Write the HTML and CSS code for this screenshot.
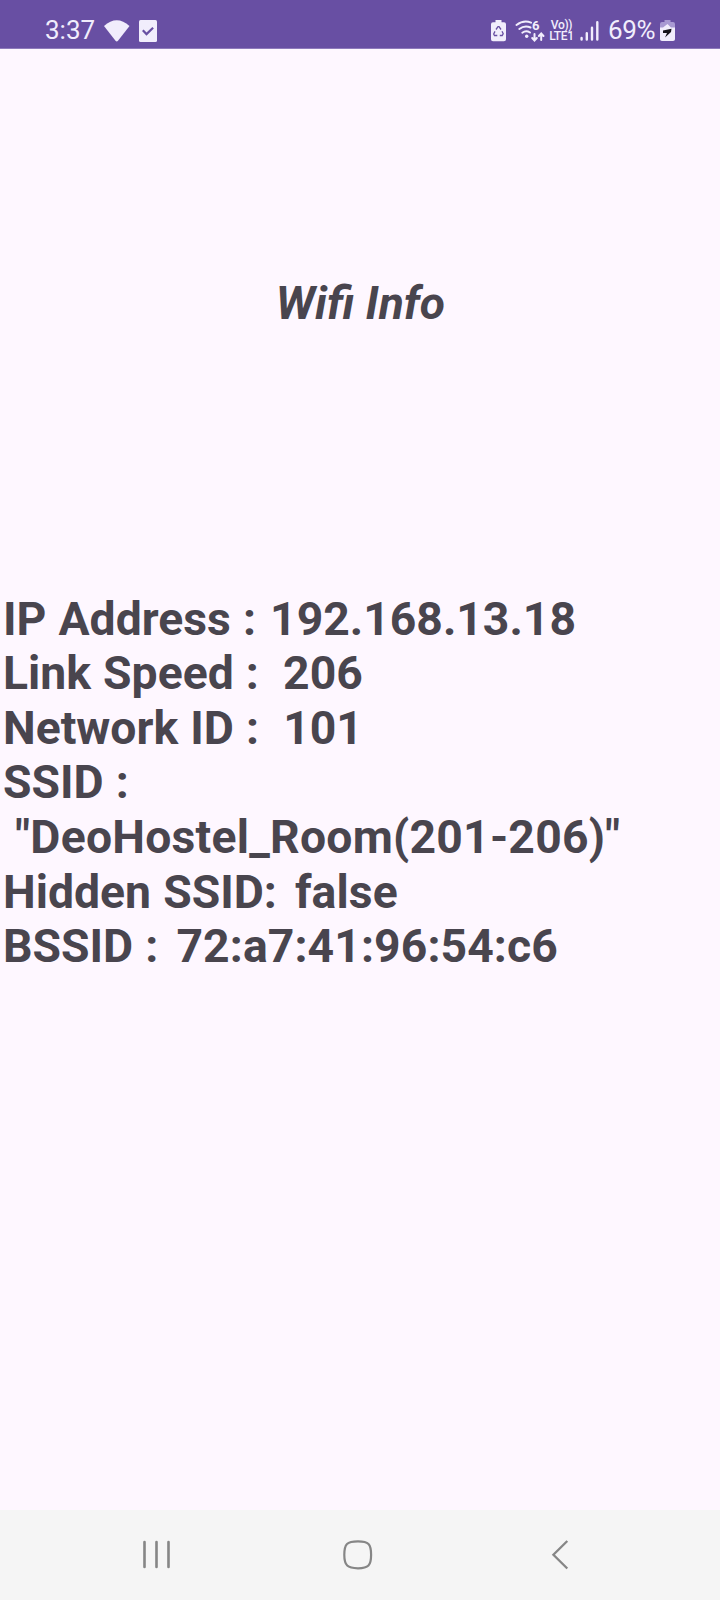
FILE: index.html
```html
<!DOCTYPE html>
<html lang="en">
<head>
<meta charset="utf-8">
<title>Wifi Info</title>
<link rel="stylesheet" href="styles.css">
</head>
<body>
<div class="screen">
  <header class="status">
    <div class="status-left">
      <span class="clock">3:37</span>
      <svg class="ic-wifi" width="28" height="24" viewBox="0 0 28 24"><path d="M1 6Q13.700-5.500 26.500 6L15 20.800q-1.200 1.400-2.500 0z" fill="#f1edfc"/></svg>
      <svg class="ic-check" width="18" height="22" viewBox="0 0 18 22"><rect width="18" height="22" rx="1.500" fill="#f1edfc"/><path d="M3.800 10.300l3.700 3.800 6.600-6.300" fill="none" stroke="#684fa3" stroke-width="2.200"/></svg>
    </div>
    <div class="status-right">
      <svg class="ic-saver" width="15" height="22" viewBox="0 0 15 22"><path d="M4.500 0h6v2.300H13q2 0 2 2v15q0 2-2 2H2q-2 0-2-2v-15q0-2 2-2h2.500z" fill="#f1edfc"/><path d="M5 9.500L7 6.700h1L10 9.500M11 11.300l1.200 2.400-1 1.800H8.800M6.300 15.500H3.500L2.700 14 4 11.400" fill="none" stroke="#684fa3" stroke-width="1.300"/></svg>
      <div class="wifi6">
        <svg width="30" height="23" viewBox="0 0 30 23"><g fill="none" stroke="#f1edfc" stroke-width="2" stroke-linecap="round"><path d="M1.500 5Q8.500-.3 16 2.600"/><path d="M4.300 9Q9.500 5 15.500 7.500"/><path d="M7.300 12.700Q11 9.900 15 12.500"/><path d="M19.500 14v6M17.200 18l2.300 2.500 2.300-2.500M26.200 20v-6M23.900 16l2.300-2.500 2.300 2.500"/></g><circle cx="11.700" cy="16.300" r="1.700" fill="#f1edfc"/></svg>
        <span class="six">6</span>
      </div>
      <div class="volte"><span>Vo))</span><span>LTE1</span></div>
      <svg class="ic-signal" width="19" height="20" viewBox="0 0 19 20"><path d="M1.600 17v1.500M6.800 12.300V18.500M12 6.800V18.500M17.300 1.300V18.500" stroke="#f1edfc" stroke-width="2.400" stroke-linecap="round"/></svg>
      <span class="percent">69%</span>
      <svg class="ic-batt" width="15" height="22" viewBox="0 0 15 22"><path d="M4.500 0h6v2H13q2 0 2 2v4H0V4q0-2 2-2h2.500z" fill="#a899d2"/><path d="M0 7.500h3L7.500 4l3.500 3.500h4v11.800q0 1.700-2 1.700H2q-2 0-2-1.700z" fill="#f1edfc"/><path d="M3 10.500l8.500-1.800-.5 3.300-6 5.500 2-4.500H3z" fill="#15131a"/></svg>
    </div>
  </header>
  <main class="content">
    <h1 class="title">Wifi Info</h1>
    <div class="info">
      <div class="row">IP Address : <span class="ip">192.168.13.18</span></div>
      <div class="row">Link Speed :  206</div>
      <div class="row">Network ID :  101</div>
      <div class="row">SSID :</div>
      <div class="row ssid"> "DeoHostel_Room(201-206)"</div>
      <div class="row">Hidden SSID: <span class="value">false</span></div>
      <div class="row">BSSID : <span class="value">72:a7:41:96:54:c6</span></div>
    </div>
  </main>
  <nav class="navbar">
    <svg width="30" height="32" viewBox="0 0 30 32"><path d="M3.500 3v25M15.500 3v25M27.500 3v25" stroke="#868686" stroke-width="2.600" stroke-linecap="round"/></svg>
    <svg class="home" width="32" height="32" viewBox="0 0 32 32"><path d="M16 2.300C26.500 2.300 29.100 5 29.100 15.700S26.500 29.300 16 29.300 2.300 26.500 2.300 15.700 5 2.300 16 2.300z" fill="none" stroke="#868686" stroke-width="2.200"/></svg>
    <svg width="20" height="32" viewBox="0 0 20 32"><path d="M17.300 2L3.400 15.700 17.300 29.500" fill="none" stroke="#868686" stroke-width="2.300"/></svg>
  </nav>
</div>
</body>
</html>
```
FILE: styles.css
```css
* { box-sizing: border-box; }
body {
  margin: 0;
  font-family: Roboto, "Liberation Sans", sans-serif;
}
svg { display: block; flex: none; }
.screen {
  display: flex;
  flex-direction: column;
  width: 720px;
  height: 1600px;
  background: #fef7ff;
}
.status {
  display: flex;
  justify-content: space-between;
  height: 49px;
  padding: 0 45px;
  background: #684fa3;
  border-bottom: 1px solid #8e7abb;
  color: #f1edfc;
}
.status-left, .status-right {
  display: flex;
  align-items: flex-start;
  padding-top: 20px;
}
.clock, .percent {
  font-size: 26px;
  line-height: 30px;
  margin-top: -5px;
}
.clock { width: 49px; }
.percent { width: 48px; margin-left: 9px; letter-spacing: -0.3px; }
.ic-wifi { margin-left: 9px; }
.ic-check { margin-left: 8px; }
.wifi6 { display: flex; width: 30px; margin-left: 9px; }
.six {
  margin: -1px 0 0 -13px;
  font-size: 13px;
  font-weight: 700;
  line-height: 14px;
}
.volte {
  display: flex;
  flex-direction: column;
  align-items: center;
  width: 27px;
  margin-left: 3px;
  font-size: 12px;
  font-weight: 500;
  line-height: 11px;
  letter-spacing: -0.3px;
}
.ic-signal { margin-left: 5px; margin-top: 1px; }
.ic-batt { margin-left: 4px; }
.content {
  flex: 1;
  color: #49454e;
  font-size: 46.3px;
  font-weight: 700;
}
.title {
  margin: 227px 0 0;
  padding-left: 1px;
  font-size: 46.2px;
  font-style: italic;
  line-height: 55px;
  text-align: center;
}
.info {
  margin-top: 260.5px;
  padding-left: 3px;
}
.row {
  height: 54.67px;
  line-height: 54.67px;
  white-space: pre;
  word-spacing: 0.6px;
}
.ssid { letter-spacing: 0.24px; }
.value { margin-left: 6px; letter-spacing: 0.1px; }
.ip { margin-left: 2px; }
.navbar {
  display: flex;
  justify-content: space-between;
  height: 90px;
  padding: 29px 150px 0 141px;
  background: #f5f5f5;
}
.home { margin-left: -6px; }
```
